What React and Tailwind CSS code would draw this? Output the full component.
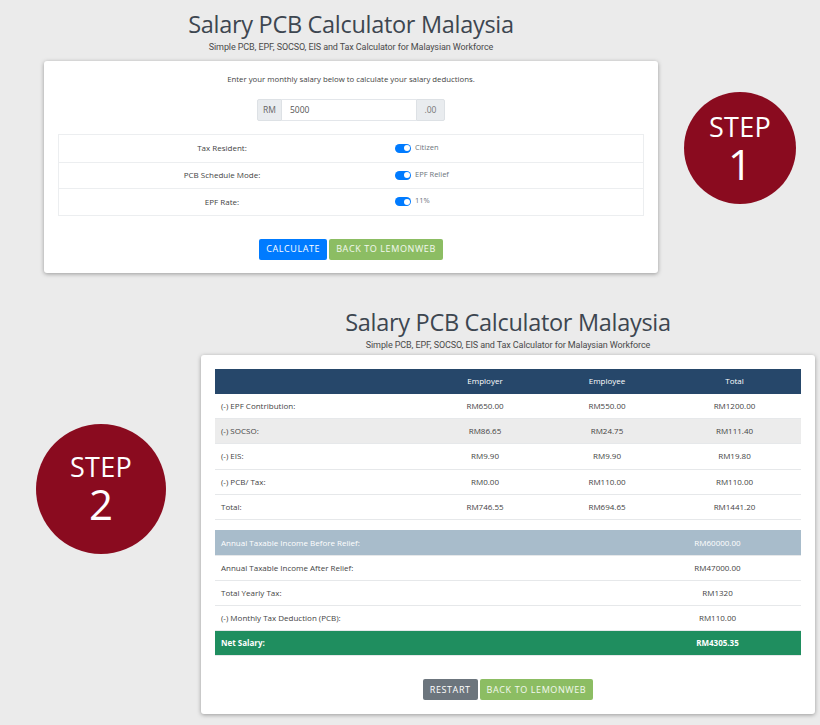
import React from "react";

const F = { fontFamily: '"Open Sans", "Noto Sans", sans-serif' };

function Toggle({ label }) {
  return (
    <div className="flex items-center gap-[4px]">
      <div className="w-[16px] h-[9px] rounded-full bg-[#007bff] flex items-center justify-end pr-[1.5px]">
        <div className="w-[6px] h-[6px] rounded-full bg-white" />
      </div>
      <span className="text-[7.5px] text-[#6c757d] -mt-[2px]">{label}</span>
    </div>
  );
}

function Step({ n, big }) {
  return (
    <div
      className={
        (big ? "w-[130px] h-[130px]" : "w-[112px] h-[112px]") +
        " rounded-full bg-[#8a0b1f] flex flex-col items-center justify-center text-white shrink-0"
      }
      style={F}
    >
      <span className="text-[27px] leading-[27px] tracking-[0.3px]">STEP</span>
      <span className="text-[42px] leading-[40px] mt-[4px]">{n}</span>
    </div>
  );
}

function Heading() {
  return (
    <div className="flex flex-col items-center">
      <h1 className="text-[23.5px] leading-[30px] text-[#3d4650] tracking-[-0.3px]" style={F}>
        Salary PCB Calculator Malaysia
      </h1>
      <p
        className="text-[9px] leading-[12px] text-[#4a4a4a] font-normal mt-[2px] tracking-[-0.1px]"
        style={{ fontFamily: '"Roboto", sans-serif' }}
      >
        Simple PCB, EPF, SOCSO, EIS and Tax Calculator for Malaysian Workforce
      </p>
    </div>
  );
}

const rows1 = [
  ["(-) EPF Contribution:", "RM650.00", "RM550.00", "RM1200.00", ""],
  ["(-) SOCSO:", "RM86.65", "RM24.75", "RM111.40", "bg-[#ececec]"],
  ["(-) EIS:", "RM9.90", "RM9.90", "RM19.80", ""],
  ["(-) PCB/ Tax:", "RM0.00", "RM110.00", "RM110.00", ""],
  ["Total:", "RM746.55", "RM694.65", "RM1441.20", ""],
];

const rows2 = [
  ["Annual Taxable Income Before Relief:", "RM60000.00", "bg-[#a8bccb] text-white"],
  ["Annual Taxable Income After Relief:", "RM47000.00", "text-[#444]"],
  ["Total Yearly Tax:", "RM1320", "text-[#444]"],
  ["(-) Monthly Tax Deduction (PCB):", "RM110.00", "text-[#444]"],
  ["Net Salary:", "RM4305.35", "bg-[#1f8e5f] text-white font-bold"],
];

export default function App() {
  return (
    <div className="w-[820px] h-[725px] bg-[#ebebeb] overflow-hidden" style={F}>
      {/* Section 1 */}
      <div className="flex pl-[44px] pt-[9px]">
        <div className="w-[614px] flex flex-col">
          <Heading />
          <div className="mt-[8px] bg-white rounded-[3px] shadow-[0_1px_4px_rgba(0,0,0,0.35)] px-[14px] pt-[11px] pb-[13px] flex flex-col items-center">
            <p className="text-[7.8px] leading-[14px] text-[#444]">
              Enter your monthly salary below to calculate your salary deductions.
            </p>
            <div className="mt-[13px] flex h-[22px] w-[188px] text-[8.5px]">
              <div className="w-[25px] bg-[#e9ecef] border border-[#dde1e5] rounded-l-[2px] flex items-center justify-center text-[#666]">
                RM
              </div>
              <div className="flex-1 border-y border-[#e3e6ea] flex items-center pl-[8px] text-[#555]">5000</div>
              <div className="w-[29px] bg-[#e9ecef] border border-[#dde1e5] rounded-r-[2px] flex items-center justify-center text-[#777]">
                .00
              </div>
            </div>
            <div className="mt-[13px] w-full border border-[#eceef0]">
              {[
                ["Tax Resident:", "Citizen"],
                ["PCB Schedule Mode:", "EPF Relief"],
                ["EPF Rate:", "11%"],
              ].map(([a, b], i) => (
                <div
                  key={a}
                  className={"grid grid-cols-[326px_1fr] h-[26.5px] items-center " + (i ? "border-t border-[#eceef0]" : "")}
                >
                  <div className="text-center text-[8px] text-[#444]">{a}</div>
                  <div className="pl-[10px]">
                    <Toggle label={b} />
                  </div>
                </div>
              ))}
            </div>
            <div className="mt-[23px] flex gap-[2px]">
              <button className="h-[21px] px-[7px] bg-[#007bff] text-white text-[9px] tracking-[0.6px] rounded-[2px]">
                CALCULATE
              </button>
              <button className="h-[21px] px-[7px] bg-[#8cbd63] text-white/90 text-[9px] tracking-[0.6px] rounded-[2px]">
                BACK TO LEMONWEB
              </button>
            </div>
          </div>
        </div>
        <div className="ml-[26px] mt-[83px]">
          <Step n="1" />
        </div>
      </div>

      {/* Section 2 */}
      <div className="flex pl-[36px] mt-[34px]">
        <div className="mt-[117px]">
          <Step n="2" big />
        </div>
        <div className="ml-[35px] w-[614px] flex flex-col">
          <Heading />
          <div className="mt-[4px] bg-white rounded-[3px] shadow-[0_1px_4px_rgba(0,0,0,0.35)] px-[14px] pt-[14px] pb-[14px] flex flex-col items-center">
            <div className="w-full text-[8px]">
              <div className="grid grid-cols-[209px_122px_122px_1fr] h-[25px] items-center bg-[#26476a] text-white">
                <div />
                <div className="text-center">Employer</div>
                <div className="text-center">Employee</div>
                <div className="text-center">Total</div>
              </div>
              {rows1.map(([a, b, c, d, bg]) => (
                <div
                  key={a}
                  className={"grid grid-cols-[209px_122px_122px_1fr] h-[25.4px] items-center border-b border-[#e6e8ea] text-[#444] " + bg}
                >
                  <div className="pl-[6px]">{a}</div>
                  <div className="text-center">{b}</div>
                  <div className="text-center">{c}</div>
                  <div className="text-center">{d}</div>
                </div>
              ))}
              <div className="mt-[10px]">
                {rows2.map(([a, b, cls]) => (
                  <div
                    key={a}
                    className={"grid grid-cols-[1fr_167px] h-[25.2px] items-center border-b border-[#e6e8ea] " + cls}
                  >
                    <div className="pl-[6px]">{a}</div>
                    <div className="text-center">{b}</div>
                  </div>
                ))}
              </div>
            </div>
            <div className="mt-[23px] flex gap-[2px]">
              <button className="h-[21px] px-[7px] bg-[#6c757d] text-white text-[9px] tracking-[0.6px] rounded-[2px]">
                RESTART
              </button>
              <button className="h-[21px] px-[7px] bg-[#8cbd63] text-white/90 text-[9px] tracking-[0.6px] rounded-[2px]">
                BACK TO LEMONWEB
              </button>
            </div>
          </div>
        </div>
      </div>
    </div>
  );
}
